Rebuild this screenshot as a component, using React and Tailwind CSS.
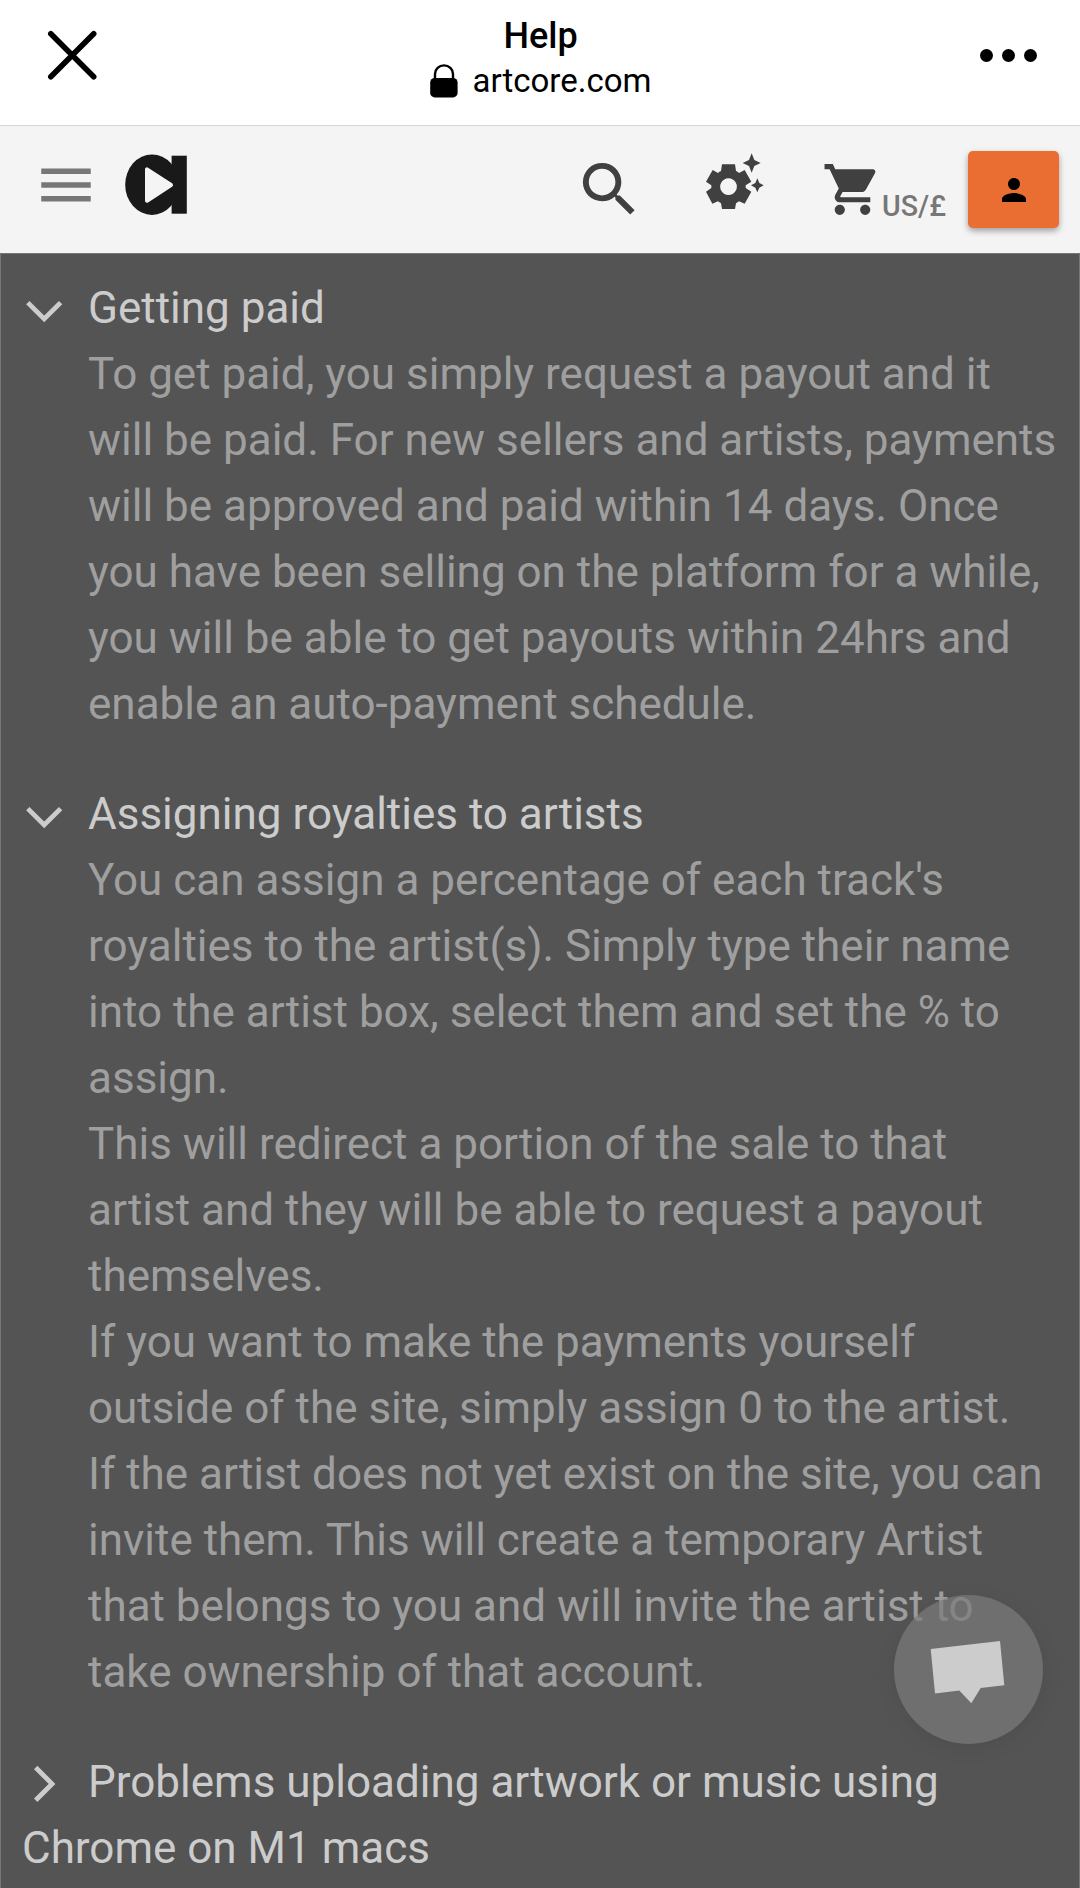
import { MdMenu, MdPerson, MdSearch, MdShoppingCart } from "react-icons/md";

const topics = [
  {
    title: "Getting paid",
    open: true,
    paragraphs: [
      "To get paid, you simply request a payout and it will be paid. For new sellers and artists, payments will be approved and paid within 14 days. Once you have been selling on the platform for a while, you will be able to get payouts within 24hrs and enable an auto-payment schedule.",
    ],
  },
  {
    title: "Assigning royalties to artists",
    open: true,
    paragraphs: [
      "You can assign a percentage of each track's royalties to the artist(s). Simply type their name into the artist box, select them and set the % to assign.",
      "This will redirect a portion of the sale to that artist and they will be able to request a payout themselves.",
      "If you want to make the payments yourself outside of the site, simply assign 0 to the artist.",
      "If the artist does not yet exist on the site, you can invite them. This will create a temporary Artist that belongs to you and will invite the artist to take ownership of that account.",
    ],
  },
  {
    title: "Problems uploading artwork or music using Chrome on M1 macs",
    open: false,
    paragraphs: [],
  },
];

function BrowserBar() {
  return (
    <div className="flex h-[126px] shrink-0 items-start justify-between border-b border-[#d6d6d9] bg-white text-black">
      <svg
        className="mt-[28px] ml-[45px] h-[55px] w-[55px]"
        viewBox="0 0 55 55"
        stroke="currentColor"
        strokeWidth="5.6"
        strokeLinecap="round"
      >
        <path d="M5.8 5.8 48.7 48.7M48.7 5.8 5.8 48.7" />
      </svg>

      <div className="mt-[15px] ml-px flex flex-col items-center">
        <h1 className="text-[36px] leading-[42px] font-medium">Help</h1>
        <div className="mt-[3px] flex items-center gap-[15px]">
          <svg className="h-[34px] w-[28px]" viewBox="0 0 28 34">
            <rect x="0.2" y="14" width="27.4" height="19.4" rx="4.5" />
            <path
              d="M5 16V10a9 8.6 0 0 1 18 0v6"
              fill="none"
              stroke="currentColor"
              strokeWidth="2.4"
            />
          </svg>
          <span className="text-[33px] leading-[42px]">artcore.com</span>
        </div>
      </div>

      <div className="mt-[49px] mr-[43px] flex gap-[9px]">
        <span className="h-[13px] w-[13px] rounded-full bg-black" />
        <span className="h-[13px] w-[13px] rounded-full bg-black" />
        <span className="h-[13px] w-[13px] rounded-full bg-black" />
      </div>
    </div>
  );
}

function Logo() {
  return (
    <svg className="h-[62px] w-[62px]" viewBox="0 0 62 62">
      <ellipse cx="27" cy="30.7" rx="26.8" ry="30.2" fill="#191919" />
      <path d="M46.6 1.7h15.2v58H46.6z" fill="#191919" />
      <path
        d="M22 15.4v31.4L46 31z"
        fill="#f4f4f4"
        stroke="#f4f4f4"
        strokeWidth="4"
        strokeLinejoin="round"
      />
    </svg>
  );
}

// gear with two sparkles
function SettingsIcon() {
  return (
    <svg
      className="mt-[26px] ml-[59px] h-[58px] w-[60px]"
      viewBox="0 0 180 174"
      fill="currentColor"
    >
      <path
        fillRule="evenodd"
        d="M54 37h39l3 20q5 2 9 6l17-9 20 35-17 11v8l17 11-20 36-17-7q-4 3-9 6l-3 17H54l-3-17q-5-3-9-6l-17 7-19-36 16-11v-8L6 89l20-35 16 9q4-4 9-6zM73.500 79a25 25 0 1 0 .1 0z"
      />
      <path d="M143 4l8 20 19 9-19 9-8 20-8-20-19-9 19-9zM160 79l6 14 13 7-13 7-6 14-6-14-13-7 13-7z" />
    </svg>
  );
}

function SiteHeader() {
  return (
    <header className="flex h-[127px] shrink-0 items-start bg-[#f4f4f4] text-[#404040]">
      <MdMenu className="mt-[26px] ml-[33px] h-[66px] w-[66px] text-[#777]" />
      <div className="mt-[28px] ml-[26px]">
        <Logo />
      </div>
      <MdSearch className="mt-[28px] ml-[387px] h-[71px] w-[71px]" />
      <SettingsIcon />
      <MdShoppingCart className="mt-[33px] ml-[58px] h-[61px] w-[61px]" />
      <span className="mt-[63px] -ml-px w-[86px] text-[28.6px] leading-[34px] font-medium text-[#777]">
        US/£
      </span>
      <button className="mt-[25px] flex h-[77px] w-[91px] items-center justify-center rounded-[5px] bg-[#ea6d32] text-black shadow-[0_3px_6px_rgba(0,0,0,0.35)]">
        <MdPerson className="h-[36px] w-[36px]" />
      </button>
    </header>
  );
}

function Chevron({ open }) {
  return (
    <svg
      className="inline-block h-[66px] w-[66px] align-top"
      viewBox="0 0 66 66"
      fill="none"
      stroke="currentColor"
      strokeWidth="4.8"
    >
      <path
        d={
          open ? "M5.8 27.6 22.2 43.9 38.6 27.6" : "M13.7 18.5 30 34.9 13.7 51.2"
        }
      />
    </svg>
  );
}

function Topic({ topic }) {
  return (
    <section className="mb-[44px]">
      <h2 className="px-[21px] text-[#ccc]">
        <Chevron open={topic.open} />
        {topic.title}
      </h2>
      {topic.open && (
        <div className="pr-[20px] pl-[87px] text-[#9f9f9f]">
          {topic.paragraphs.map((text) => (
            <p key={text}>{text}</p>
          ))}
        </div>
      )}
    </section>
  );
}

function ChatButton() {
  return (
    <button className="absolute top-[1595px] left-[894px] h-[149px] w-[149px] rounded-full bg-[#7b7b7b]/70 shadow-[0_4px_20px_rgba(0,0,0,0.08)]">
      <svg className="h-[149px] w-[149px]" viewBox="0 0 149 149">
        <path
          d="M36.7 54 106 46l4.3 44.3-23.6 2.7-9.4 15.3L65.3 95.500 41 98.6z"
          fill="#ccc"
        />
      </svg>
    </button>
  );
}

export default function App() {
  return (
    <div className="relative flex h-[1888px] w-[1080px] flex-col overflow-hidden bg-[#545454] font-[Roboto,sans-serif]">
      <BrowserBar />
      <SiteHeader />
      <main className="flex-1 border-x border-t border-[#777] pt-[21px] text-[44px] leading-[66px]">
        {topics.map((topic) => (
          <Topic key={topic.title} topic={topic} />
        ))}
      </main>
      <ChatButton />
    </div>
  );
}
